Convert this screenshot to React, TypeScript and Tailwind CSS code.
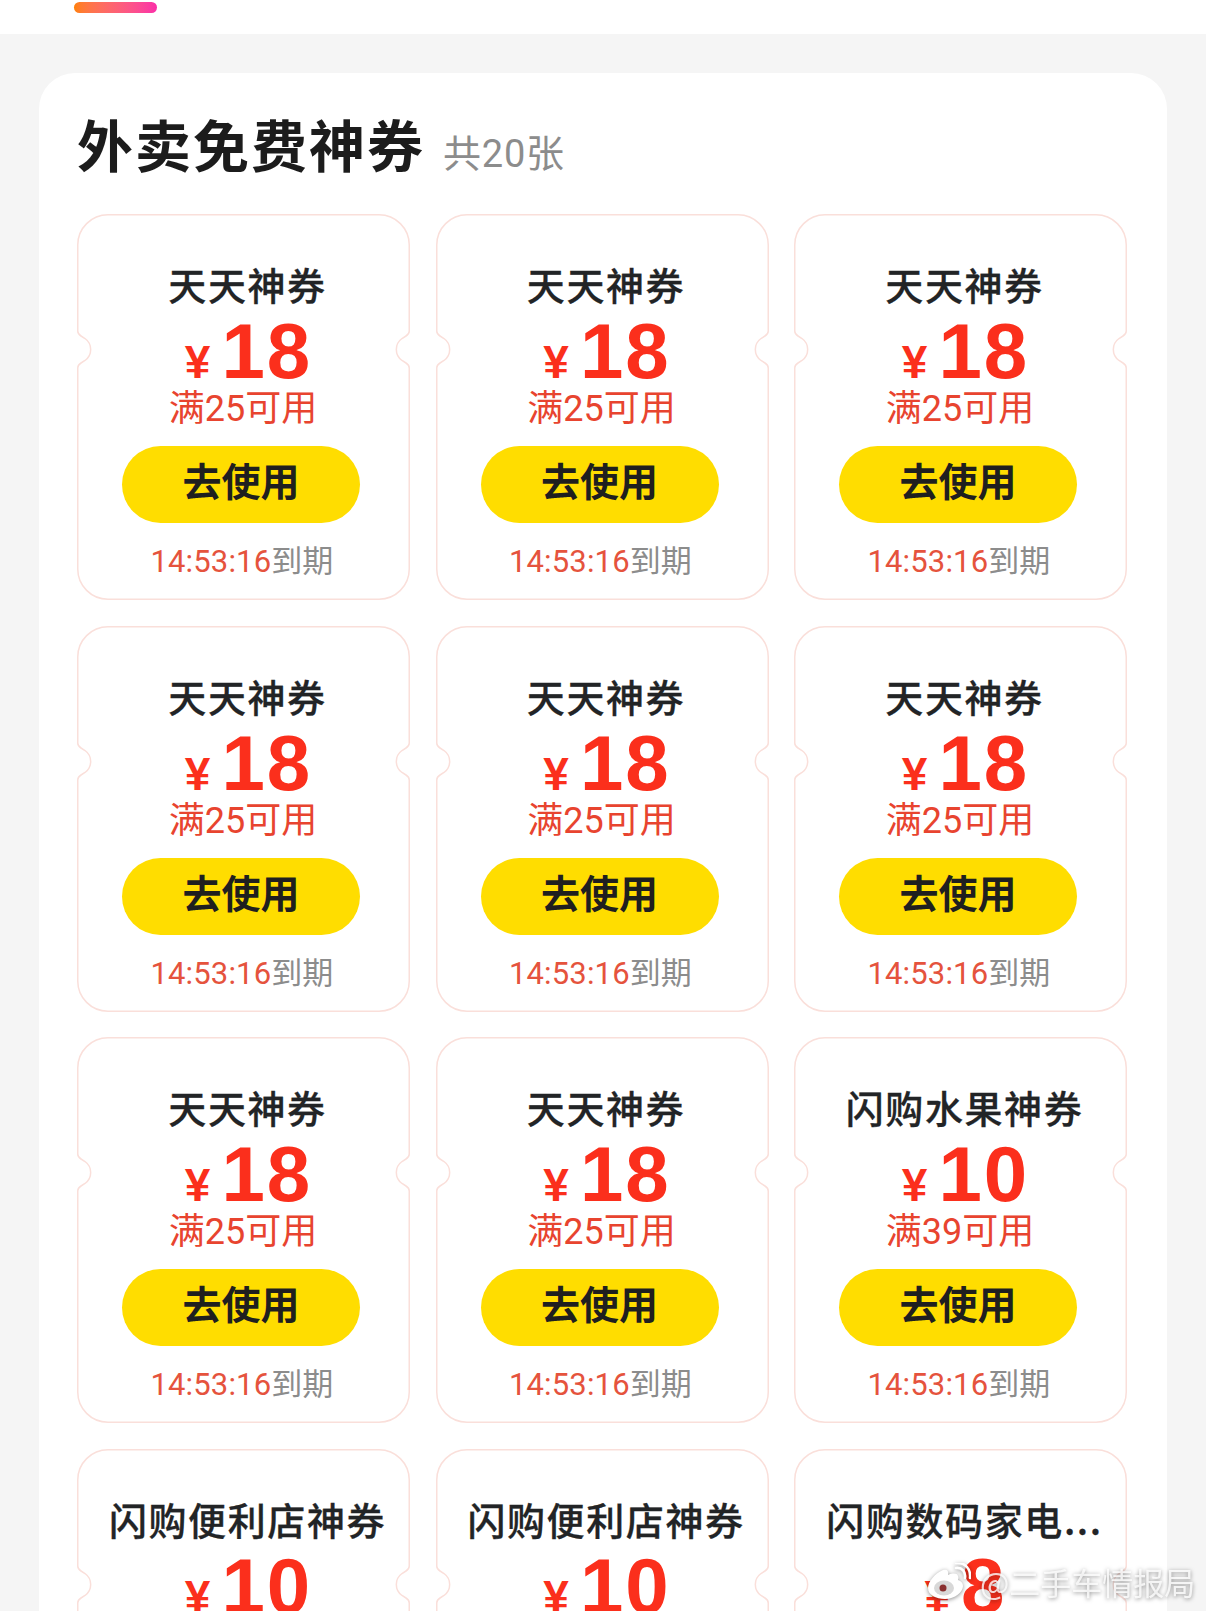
const cjk = "font-['Noto_Sans_CJK_SC',sans-serif]"

interface Coupon {
  title: string
  amount: number
  limit: number
}

const tiantian: Coupon = { title: '天天神券', amount: 18, limit: 25 }

const coupons: Coupon[] = [
  ...Array.from({ length: 8 }, () => tiantian),
  { title: '闪购水果神券', amount: 10, limit: 39 },
  { title: '闪购便利店神券', amount: 10, limit: 39 },
  { title: '闪购便利店神券', amount: 10, limit: 39 },
  { title: '闪购数码家电...', amount: 8, limit: 29 },
]

function CouponOutline() {
  return (
    <svg className="absolute inset-0" width="333" height="386" viewBox="0 0 333 386" fill="none">
      <path
        d="M31 .75H302A30.25 30.25 0 0 1 332.25 31V117Q332.25 120 329 122L325 124.5A13.5 13.5 0 0 0 325 146.5L329 149Q332.25 151 332.25 154V355A30.25 30.25 0 0 1 302 385.25H31A30.25 30.25 0 0 1 .75 355V154Q.75 151 4 149L8 146.5A13.5 13.5 0 0 0 8 124.5L4 122Q.75 120 .75 117V31A30.25 30.25 0 0 1 31 .75Z"
        stroke="#fadfda"
        strokeWidth="1.5"
      />
    </svg>
  )
}

function CouponCard({ coupon }: { coupon: Coupon }) {
  return (
    <div className="relative flex h-[386px] flex-col items-center pt-[48px]">
      <CouponOutline />
      <div className={`relative ml-[8px] h-[44px] whitespace-nowrap text-[38px] leading-[44px] font-medium tracking-[1.6px] text-[#222426] [-webkit-text-stroke:0.3px_#222426] ${cjk}`}>
        {coupon.title}
      </div>
      <div className="relative ml-[10px] mt-[6px] flex h-[80px] items-baseline font-['Liberation_Sans',sans-serif] font-bold text-[#fb2f1c]">
        <span className="mr-[11px] text-[46px] leading-none">¥</span>
        <span className="text-[78px] leading-none tracking-[2px]">{coupon.amount}</span>
      </div>
      <div className="relative -ml-[1px] -mt-[3px] h-[40px] whitespace-nowrap text-[36px] leading-[40px] text-[#e8442f] font-['Roboto','Noto_Sans_CJK_SC',sans-serif]">
        满{coupon.limit}可用
      </div>
      <button className="relative -ml-[5px] mt-[17px] h-[77px] w-[238px] rounded-full bg-[#ffdd00]">
        <span className={`relative -top-[5px] text-[39px] font-bold text-[#1f1f1f] ${cjk}`}>去使用</span>
      </button>
      <div className="relative -ml-[3px] mt-[19px] h-[40px] whitespace-nowrap text-[31px] leading-[40px] tracking-[0.15px] font-['Roboto','Noto_Sans_CJK_SC',sans-serif]">
        <span className="text-[#e5533d]">14:53:16</span>
        <span className="text-[#8c8c8c]">到期</span>
      </div>
    </div>
  )
}

function WeiboMark() {
  return (
    <svg width="44" height="38" viewBox="0 0 44 38" fill="none" className="drop-shadow-[0_1px_2px_rgba(0,0,0,0.45)]">
      <path
        d="M18 36C9 36 1 32 1 25 1 19 8 10 16 7c4-1 6 1 5 5 5-2 9-2 10 1 1 2 0 3 0 4 3 1 5 3 5 6 0 6-8 13-18 13Z"
        fill="#fff"
      />
      <ellipse cx="17" cy="25" rx="10" ry="7.5" fill="#d8d8d8" />
      <circle cx="16" cy="25" r="3.5" fill="#8a3030" />
      <path d="M29 5c6-1 10 4 9 10M29 0c9-1 15 6 14 15" stroke="#fff" strokeWidth="2.6" strokeLinecap="round" />
    </svg>
  )
}

export default function App() {
  return (
    <div className="relative h-[1611px] w-[1206px] overflow-hidden bg-[#f5f5f5]">
      <div className="h-[34px] bg-white pl-[74px] pt-[2px]">
        <div className="h-[11px] w-[83px] rounded-full bg-gradient-to-r from-[#ff8000] to-[#fb2ea8]" />
      </div>

      <div className="mx-[39px] mt-[39px] rounded-t-[36px] bg-white pl-[38px] pr-[40px] pt-[32px]">
        <div className="flex h-[76px] items-baseline">
          <h1 className={`whitespace-nowrap text-[56px] leading-[76px] font-bold tracking-[2px] text-[#1c1c1c] ${cjk}`}>
            外卖免费神券
          </h1>
          <span className="ml-[18px] whitespace-nowrap text-[38px] leading-[76px] text-[#8c8c8c] tracking-[0.8px] font-['Roboto','Noto_Sans_CJK_SC',sans-serif]">
            共20张
          </span>
        </div>
        <div className="mt-[33px] grid grid-cols-[333px_333px_333px] gap-x-[25.5px] gap-y-[25.5px]">
          {coupons.map((coupon, i) => (
            <CouponCard key={i} coupon={coupon} />
          ))}
        </div>
      </div>

      {/* weibo watermark */}
      <div className="absolute left-[927px] top-[1563px] flex items-center">
        <WeiboMark />
        <span className={`ml-[9px] whitespace-nowrap text-[31px] leading-[38px] text-white/80 drop-shadow-[0_1px_2px_rgba(0,0,0,0.55)] ${cjk}`}>
          @二手车情报局
        </span>
      </div>
    </div>
  )
}
